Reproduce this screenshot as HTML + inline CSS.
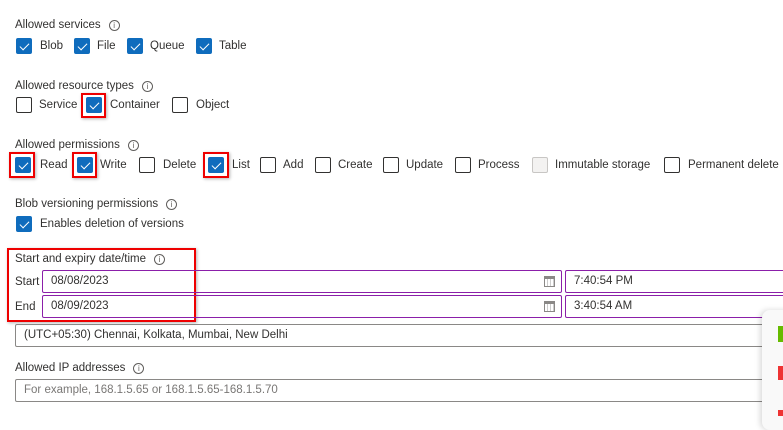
<!DOCTYPE html>
<html><head><meta charset="utf-8"><style>
*{box-sizing:border-box;margin:0;padding:0}
body{width:783px;height:417px;overflow:hidden;background:#fff;position:relative;font-family:"Liberation Sans",sans-serif;font-size:11.5px;color:#323130}
.t{position:absolute;white-space:nowrap;line-height:14px}
.cb{position:absolute;width:16px;height:16px;border:1px solid #323130;border-radius:2px;background:#fff}
.cb.on{background:#0f6cbd;border-color:#0f6cbd}
.cb.on::after{content:"";position:absolute;left:5px;top:2px;width:4px;height:8px;border:solid #fff;border-width:0 1px 1px 0;transform:rotate(45deg)}
.cb.dis{background:#f3f2f1;border-color:#c8c6c4}
.i{display:inline-block;width:11px;height:11px;border:1px solid #605e5c;border-radius:50%;font-size:8px;line-height:9px;text-align:center;margin-left:8px;vertical-align:0px;color:#605e5c}
.red{position:absolute;border:2px solid #e00;box-shadow:1px 1px 3px rgba(0,0,0,.3)}
.in{position:absolute;height:23px;border:1px solid #8a8886;border-radius:2px;padding-left:8px;line-height:21px;white-space:nowrap;overflow:hidden}
.pu{border-color:#8b1fa9}
.cal{position:absolute;right:6px;top:5px;width:11px;height:11px;border:1px solid #8a8886;border-top-width:3px;background:repeating-linear-gradient(90deg,#fff 0 2px,#ccc 2px 3px)}
</style></head><body>
<div class="t" style="left:15px;top:18px">Allowed services<span class="i">i</span></div>
<div class="cb on" style="left:16px;top:38px"></div><div class="t" style="left:40px;top:39px">Blob</div>
<div class="cb on" style="left:74px;top:38px"></div><div class="t" style="left:97px;top:39px">File</div>
<div class="cb on" style="left:127px;top:38px"></div><div class="t" style="left:150px;top:39px">Queue</div>
<div class="cb on" style="left:196px;top:38px"></div><div class="t" style="left:219px;top:39px">Table</div>

<div class="t" style="left:15px;top:79px">Allowed resource types<span class="i">i</span></div>
<div class="cb" style="left:16px;top:97px"></div><div class="t" style="left:39px;top:98px">Service</div>
<div class="red" style="left:81px;top:93px;width:25px;height:25px"></div>
<div class="cb on" style="left:86px;top:97px"></div><div class="t" style="left:110px;top:98px">Container</div>
<div class="cb" style="left:172px;top:97px"></div><div class="t" style="left:196px;top:98px">Object</div>

<div class="t" style="left:15px;top:138px">Allowed permissions<span class="i">i</span></div>
<div class="red" style="left:9px;top:152px;width:26px;height:26px"></div>
<div class="cb on" style="left:15px;top:157px"></div><div class="t" style="left:40px;top:158px">Read</div>
<div class="red" style="left:72px;top:152px;width:25px;height:26px"></div>
<div class="cb on" style="left:77px;top:157px"></div><div class="t" style="left:100px;top:158px">Write</div>
<div class="cb" style="left:139px;top:157px"></div><div class="t" style="left:163px;top:158px">Delete</div>
<div class="red" style="left:203px;top:152px;width:26px;height:26px"></div>
<div class="cb on" style="left:208px;top:157px"></div><div class="t" style="left:232px;top:158px">List</div>
<div class="cb" style="left:260px;top:157px"></div><div class="t" style="left:283px;top:158px">Add</div>
<div class="cb" style="left:315px;top:157px"></div><div class="t" style="left:338px;top:158px">Create</div>
<div class="cb" style="left:383px;top:157px"></div><div class="t" style="left:406px;top:158px">Update</div>
<div class="cb" style="left:455px;top:157px"></div><div class="t" style="left:478px;top:158px">Process</div>
<div class="cb dis" style="left:532px;top:157px"></div><div class="t" style="left:555px;top:158px">Immutable storage</div>
<div class="cb" style="left:664px;top:157px"></div><div class="t" style="left:688px;top:158px">Permanent delete</div>

<div class="t" style="left:15px;top:197px">Blob versioning permissions<span class="i">i</span></div>
<div class="cb on" style="left:16px;top:216px"></div><div class="t" style="left:40px;top:217px">Enables deletion of versions</div>

<div class="red" style="left:7px;top:248px;width:189px;height:74px"></div>
<div class="t" style="left:15px;top:252px">Start and expiry date/time<span class="i">i</span></div>
<div class="t" style="left:15px;top:275px">Start</div>
<div class="in pu" style="left:42px;top:270px;width:520px">08/08/2023<div class="cal"></div></div>
<div class="in pu" style="left:565px;top:270px;width:230px">7:40:54 PM</div>
<div class="t" style="left:15px;top:300px">End</div>
<div class="in pu" style="left:42px;top:295px;width:520px">08/09/2023<div class="cal"></div></div>
<div class="in pu" style="left:565px;top:295px;width:230px">3:40:54 AM</div>
<div class="in" style="left:15px;top:324px;width:790px">(UTC+05:30) Chennai, Kolkata, Mumbai, New Delhi</div>

<div class="t" style="left:15px;top:361px">Allowed IP addresses<span class="i">i</span></div>
<div class="in" style="left:15px;top:379px;width:790px;color:#797775">For example, 168.1.5.65 or 168.1.5.65-168.1.5.70</div>

<div style="position:absolute;left:762px;top:310px;width:40px;height:120px;background:#f9f9f9;border-radius:8px;box-shadow:-2px 0 6px rgba(0,0,0,.15)">
<div style="position:absolute;left:16px;top:16px;width:6px;height:16px;background:#6b0"></div>
<div style="position:absolute;left:16px;top:56px;width:6px;height:14px;background:#e33"></div>
<div style="position:absolute;left:16px;top:100px;width:6px;height:6px;background:#e33"></div>
</div>
</body></html>
